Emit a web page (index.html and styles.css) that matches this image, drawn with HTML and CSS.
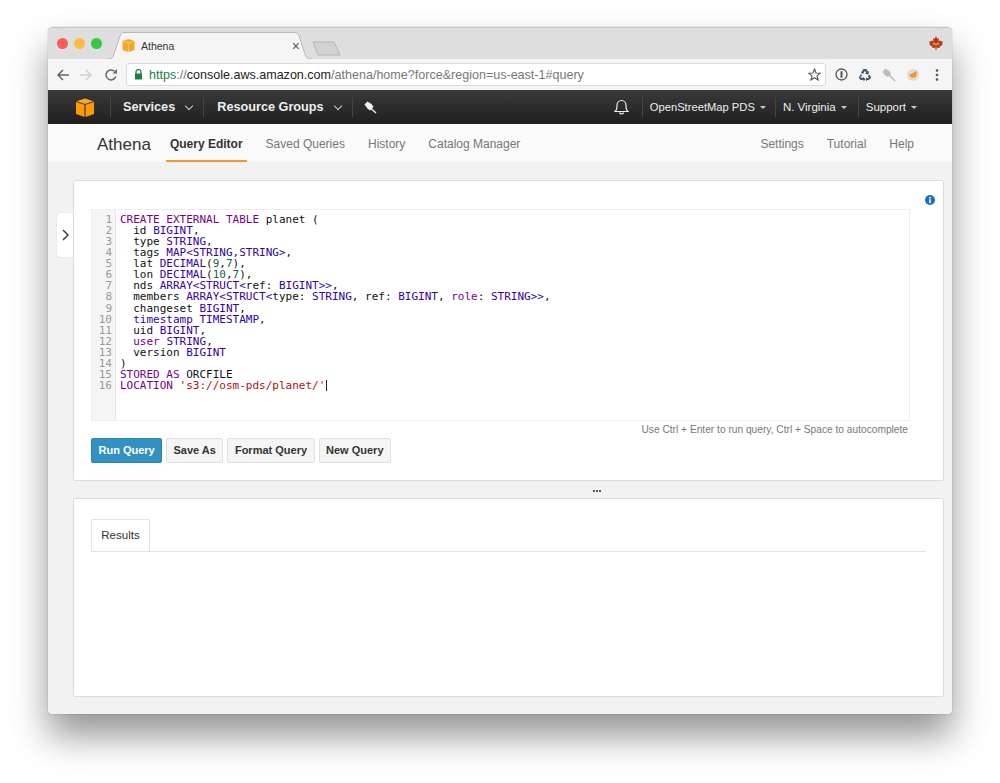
FILE: index.html
```html
<!DOCTYPE html>
<html lang="en">
<head>
  <meta charset="UTF-8">
  <title>Athena</title>
  <link rel="stylesheet" href="styles.css">
</head>
<body>
  <div class="window">
    <!-- browser chrome -->
    <div class="titlebar">
      <div class="lights">
        <span class="light red"></span>
        <span class="light yellow"></span>
        <span class="light green"></span>
      </div>
      <div class="tab">
        <svg class="tab-shape" width="205" height="27" viewBox="0 0 205 27"><path d="M0 27 H2 C5 27 6 25 7 22 L13 4 C14 1 15 .5 18 .5 H187 C190 .5 191 1 192 4 L198 22 C199 25 200 27 203 27 H205" fill="#f5f5f5" stroke="#b9b9b9"/></svg>
        <svg class="favicon" width="13" height="13" viewBox="0 0 13 13"><path d="M6.5 0 L12.5 2 V11 L6.5 13 L.5 11 V2 Z" fill="#f5a623"/><path d="M.5 2 L6.5 4 L12.5 2 M6.5 4 V13" fill="none" stroke="#fbd58a" stroke-width=".8"/></svg>
        <span class="tab-title">Athena</span>
        <span class="tab-close">×</span>
      </div>
      <svg class="new-tab" width="30" height="15" viewBox="0 0 30 15"><path d="M1 1 H22 L28 14 H6 Z" fill="#d2d2d2" stroke="#b4b4b4"/></svg>
      <svg class="leaf" width="14" height="14" viewBox="0 0 14 14"><path d="M7 0 L8.500 3 L10 2.300 L9.500 5.500 L11.200 4.200 L11.800 5.500 L14 5.200 L13 7.800 L13.800 8.400 L10.500 10.800 L10.800 12 L7.500 11.500 V14 H6.500 V11.500 L3.200 12 L3.500 10.800 L.2 8.400 L1 7.800 L0 5.200 L2.200 5.500 L2.800 4.200 L4.500 5.500 L4 2.300 L5.500 3 Z" fill="#b8321a"/><path d="M3 8 L7 10 L11 8 L9 6 L7 7.500 L5 6 Z" fill="#e08a20"/></svg>
    </div>

    <div class="toolbar">
      <svg class="tool-back" width="14" height="14" viewBox="0 0 14 14"><path d="M13 7 H2 M7 2 L2 7 L7 12" fill="none" stroke="#666" stroke-width="1.500"/></svg>
      <svg class="tool-fwd" width="14" height="14" viewBox="0 0 14 14"><path d="M1 7 H12 M7 2 L12 7 L7 12" fill="none" stroke="#d0d0d0" stroke-width="1.500"/></svg>
      <svg class="tool-reload" width="14" height="14" viewBox="0 0 14 14"><path d="M11.800 8.500 A5 5 0 1 1 10.500 3.300" fill="none" stroke="#666" stroke-width="1.500"/><path d="M8.500 5.500 H13 V1 Z" fill="#666"/></svg>
      <div class="omnibox">
        <svg class="lock" width="9" height="11" viewBox="0 0 9 11"><path d="M2 5 V3 A2.500 2.500 0 0 1 7 3 V5" fill="none" stroke="#1a7f45" stroke-width="1.200"/><rect x="1" y="4.500" width="7" height="6" rx=".8" fill="#1a7f45"/></svg>
        <span class="url"><span class="url-https">https</span><span class="url-path">://</span><span class="url-host">console.aws.amazon.com</span><span class="url-path">/athena/home?force&amp;region=us-east-1#query</span></span>
        <svg class="star" width="13" height="13" viewBox="0 0 13 13"><path d="M6.500 1 L8 5 L12.300 5.200 L9 7.900 L10.100 12 L6.500 9.700 L2.900 12 L4 7.900 L.7 5.200 L5 5 Z" fill="none" stroke="#555" stroke-width="1.100"/></svg>
      </div>
      <div class="extensions">
        <svg width="13" height="13" viewBox="0 0 13 13"><circle cx="6.500" cy="6.500" r="5.500" fill="none" stroke="#555" stroke-width="1.300"/><path d="M6.500 3.200 V9.800" stroke="#555" stroke-width="2"/></svg>
        <svg width="14" height="14" viewBox="0 0 14 14"><path d="M5.500 1 H8.500 L10 3.800 L11.300 3 L10.300 6.500 L6.800 5.800 L8.200 5 L7 2.800 L5 6 L3 4.800 Z" fill="#44586a"/><path d="M2.800 6.200 L4.500 7.200 L3.700 7.700 L2.500 9.800 H5.500 V8.500 L7.300 11.500 L5.500 13.500 V12 H2.500 L.8 9.700 Z" fill="#44586a"/><path d="M9 12 H11 L13.300 9.500 L11.500 6.800 L9.700 8 L11 10 H9 V8.800 L7.500 11.500 L9 13.500 Z" fill="#44586a"/></svg>
        <svg width="14" height="14" viewBox="0 0 14 14"><path d="M13 13 L6.500 6.500" stroke="#b5b5b5" stroke-width="1.300"/><path d="M3.500 .5 L7.500 3 L9 6 L6 9 L3 7.500 L.5 3.500 Z" fill="#bdbdbd"/></svg>
        <svg width="14" height="14" viewBox="0 0 14 14"><circle cx="7" cy="7" r="6" fill="#e8dcc8"/><path d="M3 7 L11 3 L10 9 L6 10 Z" fill="#e59a35"/></svg>
        <svg class="kebab" width="4" height="12" viewBox="0 0 4 12"><circle cx="2" cy="1.500" r="1.300" fill="#555"/><circle cx="2" cy="6" r="1.300" fill="#555"/><circle cx="2" cy="10.500" r="1.300" fill="#555"/></svg>
      </div>
    </div>

    <!-- aws console header -->
    <nav class="awsnav">
      <svg class="cube" width="18" height="19" viewBox="0 0 18 19"><path d="M9 .5 L17.500 3.200 L9 6 L.5 3.200 Z" fill="#f7a72c"/><path d="M0 4 L8.500 6.800 V19 L0 16 Z" fill="#f90"/><path d="M18 4 L9.500 6.800 V19 L18 16 Z" fill="#f90"/></svg>
      <div class="nav-left">
        <a class="nav-main nav-services">Services<span class="chev"></span></a>
        <a class="nav-main nav-groups">Resource Groups<span class="chev"></span></a>
        <a class="nav-pin"><svg width="13" height="13" viewBox="0 0 13 13"><path d="M12 12 L7 7.500" stroke="#f5f5f5" stroke-width="1.400"/><path d="M3.500 .5 L7.500 3 L9.500 6 L6 9.500 L3.500 7.500 L.5 3.500 Z" fill="#f5f5f5"/></svg></a>
      </div>
      <div class="nav-right">
        <svg class="bell" width="15" height="16" viewBox="0 0 15 16"><path d="M1 12.500 C3 11 3 9 3 6.500 C3 3.500 5 1.500 7.500 1.500 C10 1.500 12 3.500 12 6.500 C12 9 12 11 14 12.500 Z M5.500 13.500 C6 15.500 9 15.500 9.500 13.500" fill="none" stroke="#eee" stroke-width="1.200"/></svg>
        <a class="nav-sub nav-account">OpenStreetMap PDS<span class="caret"></span></a>
        <a class="nav-sub nav-region">N. Virginia<span class="caret"></span></a>
        <a class="nav-sub nav-support">Support<span class="caret"></span></a>
      </div>
    </nav>

    <div class="subnav">
      <span class="brand">Athena</span>
      <a class="subnav-link active">Query Editor</a>
      <a class="subnav-link">Saved Queries</a>
      <a class="subnav-link">History</a>
      <a class="subnav-link">Catalog Manager</a>
      <span class="subnav-spacer"></span>
      <a class="subnav-link">Settings</a>
      <a class="subnav-link">Tutorial</a>
      <a class="subnav-link">Help</a>
    </div>

    <main class="content">
      <div class="side-toggle">
        <svg width="7" height="12" viewBox="0 0 7 12"><path d="M1 1 L6 6 L1 11" fill="none" stroke="#333" stroke-width="1.400"/></svg>
      </div>

      <section class="panel panel-query">
        <div class="info-row">
          <svg width="10" height="10" viewBox="0 0 10 10"><circle cx="5" cy="5" r="5" fill="#1f6fc0"/><rect x="4.200" y="4.200" width="1.600" height="3.800" fill="#fff"/><rect x="4.200" y="2" width="1.600" height="1.500" fill="#fff"/></svg>
        </div>
        <div class="editor">
          <div class="gutter">1
2
3
4
5
6
7
8
9
10
11
12
13
14
15
16</div>
          <pre class="code"><span class="kw">CREATE EXTERNAL TABLE</span> planet (
  id <span class="ty">BIGINT</span>,
  type <span class="ty">STRING</span>,
  tags <span class="ty">MAP&lt;STRING,STRING&gt;</span>,
  lat <span class="ty">DECIMAL</span>(<span class="num">9</span>,<span class="num">7</span>),
  lon <span class="ty">DECIMAL</span>(<span class="num">10</span>,<span class="num">7</span>),
  nds <span class="ty">ARRAY&lt;STRUCT&lt;</span>ref: <span class="ty">BIGINT&gt;&gt;</span>,
  members <span class="ty">ARRAY&lt;STRUCT&lt;</span>type: <span class="ty">STRING</span>, ref: <span class="ty">BIGINT</span>, <span class="kw">role</span>: <span class="ty">STRING&gt;&gt;</span>,
  changeset <span class="ty">BIGINT</span>,
  <span class="ty">timestamp TIMESTAMP</span>,
  uid <span class="ty">BIGINT</span>,
  <span class="kw">user</span> <span class="ty">STRING</span>,
  version <span class="ty">BIGINT</span>
)
<span class="kw">STORED AS</span> ORCFILE
<span class="kw">LOCATION</span> <span class="str">'s3://osm-pds/planet/'</span><span class="cursor"></span></pre>
        </div>
        <p class="hint">Use Ctrl + Enter to run query, Ctrl + Space to autocomplete</p>
        <div class="buttons">
          <button class="btn btn-primary">Run Query</button>
          <button class="btn">Save As</button>
          <button class="btn">Format Query</button>
          <button class="btn">New Query</button>
        </div>
      </section>

      <div class="splitter"><span></span><span></span><span></span></div>

      <section class="panel panel-results">
        <div class="tabs">
          <div class="results-tab">Results</div>
        </div>
      </section>
    </main>
  </div>
</body>
</html>
```
FILE: styles.css
```css
html, body {
  margin: 0;
  height: 783px;
  overflow: hidden;
  background: #fff;
}

body {
  padding: 27px 48px 0;
  box-sizing: border-box;
  font-family: "Liberation Sans", Arial, sans-serif;
}

a { cursor: pointer; }

.window {
  height: 687px;
  display: flex;
  flex-direction: column;
  border-radius: 5px 5px 3px 3px;
  overflow: hidden;
  box-shadow: 0 22px 36px rgba(0, 0, 0, .42), 0 0 1px rgba(0, 0, 0, .6);
  background: #f2f2f2;
}

/* browser chrome */
.titlebar {
  height: 32px;
  flex: none;
  display: flex;
  align-items: flex-end;
  background: #dedede;
  border-top: 1px solid #c8c8c8;
  box-sizing: border-box;
}

.lights {
  display: flex;
  gap: 6px;
  padding: 0 0 10px 9px;
}

.light {
  width: 11px;
  height: 11px;
  border-radius: 50%;
}
.light.red { background: #fc5b57; }
.light.yellow { background: #fdbc40; }
.light.green { background: #35c94a; }

.tab {
  position: relative;
  width: 205px;
  height: 27px;
  margin-left: 5px;
  display: flex;
  align-items: center;
  padding-left: 15px;
  box-sizing: border-box;
  font-size: 10.500px;
  color: #333;
}

.tab-shape {
  position: absolute;
  left: 0;
  top: 0;
}

.favicon, .tab-title, .tab-close { position: relative; }

.tab-title { margin-left: 6px; }

.tab-close {
  margin-left: auto;
  margin-right: 12px;
  font-size: 14px;
  color: #555;
}

.new-tab { margin: 0 0 3px 0; }

.leaf { margin: 0 9px 9px auto; }

.toolbar {
  height: 31px;
  flex: none;
  display: flex;
  align-items: center;
  background: #f5f5f5;
  box-sizing: border-box;
  padding-left: 8px;
}

.tool-fwd { margin-left: 9px; }
.tool-reload { margin-left: 11px; }

.omnibox {
  width: 700px;
  height: 23px;
  margin-left: 8px;
  box-sizing: border-box;
  flex: none;
  display: flex;
  align-items: center;
  background: #fff;
  border: 1px solid #dadada;
  border-radius: 3px;
  padding: 0 4px 0 7px;
}

.url {
  margin-left: 6px;
  font-size: 12.560px;
  white-space: nowrap;
}
.url-https { color: #1a7f45; }
.url-host { color: #222; }
.url-path { color: #777; }

.star { margin-left: auto; }

.extensions {
  display: flex;
  align-items: center;
  gap: 10px;
  margin-left: 9px;
}

.kebab { margin-left: 5px; }

/* aws header */
.awsnav {
  height: 34px;
  flex: none;
  display: flex;
  align-items: center;
  padding-left: 28px;
  background: linear-gradient(#3a3a3a, #1f1f1f);
  color: #eee;
}

.nav-left {
  display: flex;
  align-items: center;
  margin-left: 16px;
}

.nav-main {
  display: flex;
  align-items: center;
  height: 20px;
  padding: 0 11px 0 13px;
  border-left: 1px solid #444;
  font-size: 12.700px;
  font-weight: bold;
}

.nav-services { padding-left: 12px; }

.chev {
  width: 5px;
  height: 5px;
  margin: -3px 0 0 11px;
  border-right: 1.500px solid #ccc;
  border-bottom: 1.500px solid #ccc;
  transform: rotate(45deg);
}

.nav-pin {
  display: flex;
  align-items: center;
  height: 20px;
  padding-left: 11px;
  border-left: 1px solid #444;
}

.nav-right {
  display: flex;
  align-items: center;
  margin-left: auto;
  padding-right: 24px;
}

.bell { margin-right: 13px; }

.nav-sub {
  display: flex;
  align-items: center;
  height: 20px;
  padding: 0 11px 0 7px;
  border-left: 1px solid #444;
  font-size: 11.500px;
}

.nav-account {
  padding-right: 9px;
  font-size: 11.200px;
}

.caret {
  width: 0;
  height: 0;
  margin-left: 5px;
  border: 3px solid transparent;
  border-top: 3px solid #ccc;
  border-bottom: 0;
}

/* athena sub nav */
.subnav {
  height: 38px;
  flex: none;
  display: flex;
  align-items: stretch;
  padding: 0 19px 0 49px;
  background: #fafafa;
  box-sizing: border-box;
}

.brand {
  align-self: center;
  margin: 3px 15px 0 0;
  font-size: 17px;
  color: #333;
}

.subnav-link {
  display: flex;
  align-items: center;
  padding: 3px 4px 0;
  margin-right: 15px;
  font-size: 12px;
  color: #777;
  border-bottom: 2px solid transparent;
}

.subnav-link.active {
  font-weight: bold;
  color: #333;
  border-bottom-color: #ec9a33;
}

.subnav-spacer { flex: 1; }

/* panels */
.content {
  position: relative;
  flex: 1;
  padding: 18px 8px 17px 25px;
  display: flex;
  flex-direction: column;
}

.side-toggle {
  position: absolute;
  left: 9px;
  top: 51px;
  width: 16px;
  height: 44px;
  display: flex;
  align-items: center;
  justify-content: center;
  background: #fff;
  border-radius: 3px 0 0 3px;
  box-shadow: 0 0 1px rgba(0, 0, 0, .25);
}

.panel {
  background: #fff;
  border: 1px solid #dcdcdc;
  border-radius: 2px;
  box-sizing: border-box;
}

.panel-query {
  height: 301px;
  padding: 0 33px 0 17px;
}

.info-row {
  height: 28px;
  display: flex;
  justify-content: flex-end;
  align-items: flex-end;
  margin-right: -25px;
  padding-bottom: 4px;
  box-sizing: border-box;
}

.editor {
  height: 212px;
  display: flex;
  border: 1px solid #eee;
  box-sizing: border-box;
}

.gutter {
  width: 24px;
  flex: none;
  padding: 4px 3px 0 0;
  box-sizing: border-box;
  background: #f5f5f5;
  border-right: 1px solid #e8e8e8;
  color: #999;
  font: 11px/11.070px "DejaVu Sans Mono", monospace;
  text-align: right;
  white-space: pre;
}

.code {
  margin: 0;
  padding: 4px 0 0 4px;
  color: #111;
  font: 11px/11.070px "DejaVu Sans Mono", monospace;
}

.kw { color: #708; }
.ty { color: #30a; }
.num { color: #164; }
.str { color: #a11; }

.cursor {
  display: inline-block;
  width: 1px;
  height: 11px;
  margin-left: 1px;
  vertical-align: -2px;
  background: #222;
}

.hint {
  margin: 0;
  padding: 2px 2px 0 0;
  height: 17px;
  box-sizing: border-box;
  text-align: right;
  font-size: 10.200px;
  line-height: 14px;
  color: #777;
}

.buttons {
  display: flex;
  gap: 4px;
}

.btn {
  height: 25px;
  padding: 0 6.500px 2px;
  border: 1px solid #e0e0e0;
  border-radius: 2px;
  background: #f5f5f5;
  color: #333;
  white-space: nowrap;
  font: bold 11px "Liberation Sans", Arial, sans-serif;
}

.btn-primary {
  width: 71px;
  border-color: #2b84b4;
  background: #3391c2;
  color: #fff;
}

.splitter {
  height: 17px;
  flex: none;
  display: flex;
  justify-content: center;
  align-items: center;
  gap: 1px;
  padding: 3px 0 0 176px;
  box-sizing: border-box;
}

.splitter span {
  width: 2px;
  height: 2px;
  background: #555;
}

.panel-results {
  flex: 1;
  padding: 20px 17px 0;
}

.tabs {
  height: 33px;
  border-bottom: 1px solid #e2e2e2;
  box-sizing: border-box;
}

.results-tab {
  width: 59px;
  height: 32px;
  box-sizing: border-box;
  background: #fff;
  border: 1px solid #e2e2e2;
  border-bottom: 0;
  border-radius: 2px 2px 0 0;
  font-size: 11.500px;
  line-height: 30px;
  text-align: center;
  color: #333;
}
```
